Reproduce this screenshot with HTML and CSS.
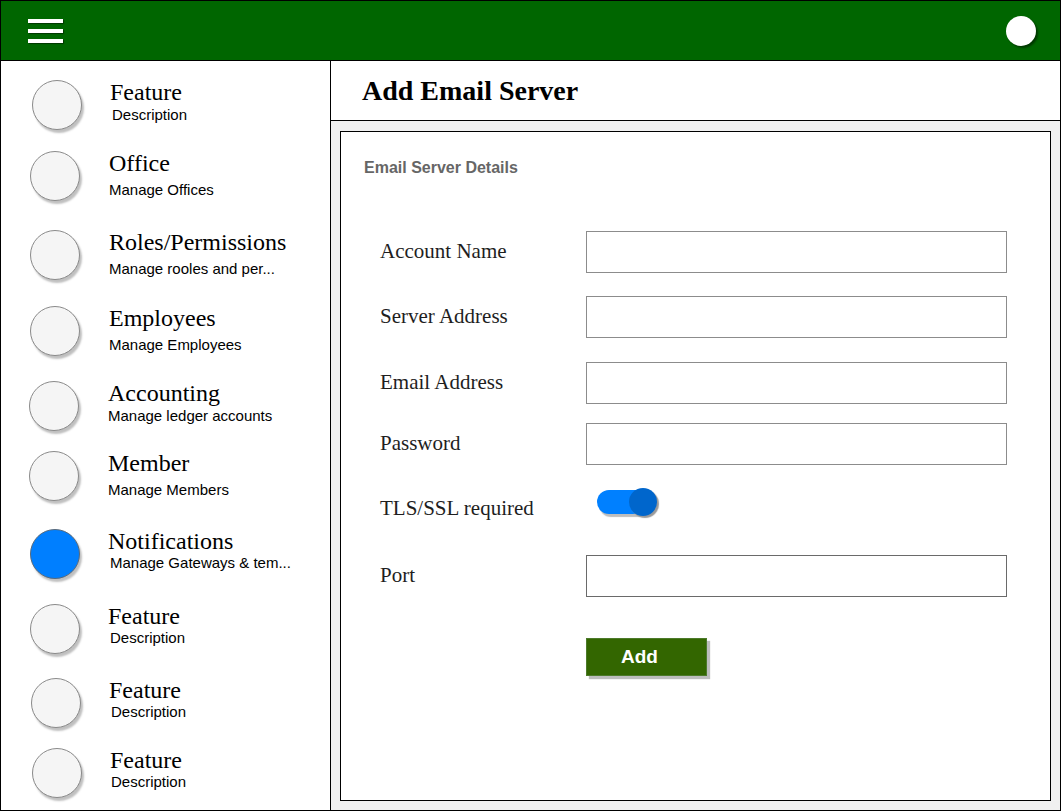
FILE: index.html
```html
<!DOCTYPE html>
<html lang="en">
<head>
<meta charset="utf-8">
<title>Add Email Server</title>
<link rel="stylesheet" href="styles.css">
</head>
<body>
<div class="app">
  <header class="topbar">
    <div class="hamburger"><span></span><span></span><span></span></div>
    <div class="avatar"></div>
  </header>
  <div class="body">
    <nav class="sidebar">
      <div class="nav-item h71 nudge2"><div class="dot"></div><div class="txt"><div class="ttl">Feature</div><div class="dsc">Description</div></div></div>
      <div class="nav-item h79 wide"><div class="dot"></div><div class="txt"><div class="ttl">Office</div><div class="dsc">Manage Offices</div></div></div>
      <div class="nav-item h76 wide"><div class="dot"></div><div class="txt"><div class="ttl">Roles/Permissions</div><div class="dsc">Manage rooles and per...</div></div></div>
      <div class="nav-item h75 wide"><div class="dot"></div><div class="txt"><div class="ttl">Employees</div><div class="dsc">Manage Employees</div></div></div>
      <div class="nav-item h70 shift-1"><div class="dot"></div><div class="txt"><div class="ttl">Accounting</div><div class="dsc">Manage ledger accounts</div></div></div>
      <div class="nav-item h78 wide shift-1"><div class="dot"></div><div class="txt"><div class="ttl">Member</div><div class="dsc">Manage Members</div></div></div>
      <div class="nav-item h75 tight"><div class="dot active"></div><div class="txt"><div class="ttl">Notifications</div><div class="dsc">Manage Gateways &amp; tem...</div></div></div>
      <div class="nav-item h74 tight"><div class="dot"></div><div class="txt"><div class="ttl">Feature</div><div class="dsc">Description</div></div></div>
      <div class="nav-item h70 tight nudge1"><div class="dot"></div><div class="txt"><div class="ttl">Feature</div><div class="dsc">Description</div></div></div>
      <div class="nav-item tight nudge2"><div class="dot"></div><div class="txt"><div class="ttl">Feature</div><div class="dsc">Description</div></div></div>
    </nav>
    <main class="main">
      <div class="title-bar"><h1>Add Email Server</h1></div>
      <div class="canvas">
        <section class="card">
          <h2>Email Server Details</h2>
          <form class="form">
            <label class="lbl">Account Name</label><div class="input"></div>
            <label class="lbl">Server Address</label><div class="input"></div>
            <label class="lbl">Email Address</label><div class="input"></div>
            <label class="lbl">Password</label><div class="input"></div>
            <label class="lbl">TLS/SSL required</label><div class="toggle-cell"><div class="toggle"><div class="knob"></div></div></div>
            <label class="lbl">Port</label><div class="input dark"></div>
            <div></div><div><button type="button" class="btn">Add</button></div>
          </form>
        </section>
      </div>
    </main>
  </div>
</div>
</body>
</html>
```

FILE: styles.css
```css
* { box-sizing: border-box; }
html, body { margin: 0; padding: 0; background: #fff; }
body { font-family: "Liberation Sans", Arial, sans-serif; }

.app {
  width: 1061px;
  height: 811px;
  border: 1px solid #000;
  display: grid;
  grid-template-rows: 60px 1fr;
  overflow: hidden;
}

.topbar {
  background: #006600;
  border-bottom: 1px solid #000;
  display: flex;
  align-items: center;
  justify-content: space-between;
  padding: 0 24px 0 27px;
}
.hamburger { display: flex; flex-direction: column; gap: 6px; padding-top: 1px; }
.hamburger span {
  display: block;
  width: 35px;
  height: 4px;
  background: #fff;
  box-shadow: 1px 1px 1px rgba(0,0,0,0.45);
}
.avatar {
  width: 30px;
  height: 30px;
  border-radius: 50%;
  background: #fff;
  box-shadow: 2px 2px 2px rgba(0,0,0,0.45);
}

.body {
  display: grid;
  grid-template-columns: 330px 1fr;
  min-height: 0;
}

.sidebar {
  border-right: 1px solid #000;
  padding-top: 19px;
  display: flex;
  flex-direction: column;
}
.nav-item { display: flex; align-items: flex-start; padding-left: 29px; flex: none; }
.h70 { height: 70px; }
.h71 { height: 71px; }
.h74 { height: 74px; }
.h75 { height: 75px; }
.h76 { height: 76px; }
.h78 { height: 78px; }
.h79 { height: 79px; }
.nudge1 { padding-left: 30px; }
.nudge2 { padding-left: 31px; }
.shift-1 { padding-left: 28px; }

.dot {
  width: 50px;
  height: 50px;
  border-radius: 50%;
  background: #f5f5f5;
  border: 1px solid #8a8a8a;
  box-shadow: 2px 3px 2px rgba(0,0,0,0.25);
  flex: none;
}
.dot.active { background: #007fff; border-color: #5a6a7a; }

.txt { margin-left: 29px; }
.nudge2 .txt { margin-left: 28px; }
.tight .txt { margin-left: 28px; }
.ttl {
  font-family: "Liberation Serif", "Times New Roman", serif;
  font-size: 24px;
  line-height: 25px;
  color: #000;
  white-space: nowrap;
}
.dsc {
  font-size: 15px;
  line-height: 17px;
  margin-top: 1px;
  color: #000;
  white-space: nowrap;
}
.wide .dsc { margin-top: 5px; }
.tight .dsc { margin-top: 0; padding-left: 2px; }
.nudge2 .dsc { padding-left: 1px; }
.h71.nudge2 .dsc { padding-left: 2px; }

.main {
  display: grid;
  grid-template-rows: 60px 1fr;
  min-height: 0;
}
.title-bar {
  border-bottom: 1px solid #000;
  display: flex;
  align-items: center;
  padding-left: 31px;
}
.title-bar h1 {
  margin: 0;
  font-family: "Liberation Serif", "Times New Roman", serif;
  font-weight: bold;
  font-size: 28px;
  line-height: 32px;
  padding-top: 1px;
}

.canvas {
  background: #f0f0f0;
  padding: 10px 9px 9px 9px;
  min-height: 0;
}
.card {
  background: #fff;
  border: 1px solid #000;
  height: 670px;
  padding: 27px 0 0 23px;
}
.card h2 {
  margin: 0;
  font-size: 16px;
  line-height: 18px;
  font-weight: bold;
  color: #666;
}

.form {
  margin-top: 54px;
  margin-left: 16px;
  display: grid;
  grid-template-columns: 206px 421px;
  grid-template-rows: 65px 66px 61px 65px 67px 83px auto;
  align-items: start;
}
.lbl {
  font-family: "Liberation Serif", "Times New Roman", serif;
  font-size: 21px;
  line-height: 41px;
  height: 41px;
  color: #1e1e1e;
  white-space: nowrap;
}
.input {
  height: 42px;
  border: 1px solid #8c8c8c;
  background: #fff;
}
.input.dark { border-color: #6a6a6a; }

.toggle-cell { padding: 2px 0 0 11px; }
.toggle {
  width: 56px;
  height: 24px;
  border-radius: 12px;
  background: #0080ff;
  box-shadow: 2px 3px 1px #bdbdbd;
  display: flex;
  align-items: center;
  justify-content: flex-end;
}
.knob {
  width: 28px;
  height: 28px;
  border-radius: 50%;
  background: #0066cc;
  margin-right: -4px;
  box-shadow: 2px 2px 1px #9a9a9a;
}

.btn {
  width: 121px;
  height: 38px;
  background: #336600;
  border: 1px solid #4c7a2a;
  color: #fff;
  font-family: "Liberation Sans", Arial, sans-serif;
  font-size: 19px;
  font-weight: bold;
  padding: 0 14px 0 0;
  box-shadow: 3px 3px 1px #bdbdbd;
  cursor: pointer;
}
```
